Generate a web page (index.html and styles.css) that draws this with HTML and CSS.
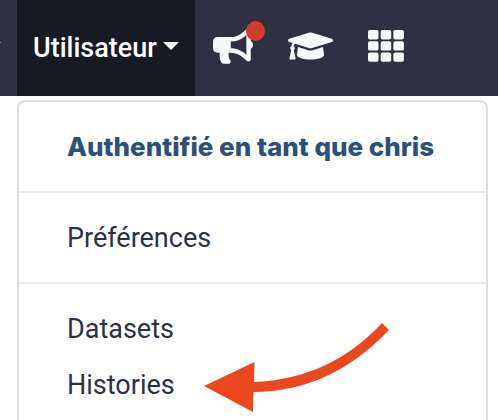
FILE: index.html
```html
<!DOCTYPE html>
<html lang="fr">
<head>
<meta charset="utf-8">
<title>Utilisateur</title>
<link rel="stylesheet" href="styles.css">
</head>
<body>
<header class="masthead">
  <div class="previous"><span class="caret"></span></div>
  <button class="user" type="button" aria-expanded="true">Utilisateur<span class="caret"></span></button>
  <nav class="tools">
    <a class="tool" href="#news" aria-label="Notifications">
      <svg width="40" height="36" viewBox="0 0 576 512"><path d="M576 240c0-23.63-12.95-44.04-32-55.12V32.01C544 23.26 537.02 0 512 0c-7.12 0-14.19 2.38-19.98 7.02l-85.03 68.03C364.28 109.19 310.66 128 256 128H64c-35.35 0-64 28.65-64 64v96c0 35.35 28.65 64 64 64h33.7c-1.39 10.48-2.18 21.14-2.18 32 0 39.77 9.26 77.35 25.56 110.94 5.19 10.69 16.52 17.06 28.4 17.06h74.28c26.05 0 41.69-29.84 25.9-50.56-16.4-21.52-26.15-48.36-26.15-77.44 0-11.11 1.62-21.79 4.41-32H256c54.66 0 108.28 18.81 150.98 52.95l85.03 68.03a32.023 32.023 0 0 0 19.98 7.02c24.92 0 32-22.78 32-32V295.13C563.05 284.04 576 263.63 576 240zm-96 141.42l-33.05-26.44C392.95 311.78 325.12 288 256 288v-96c69.12 0 136.95-23.78 190.95-66.98L480 98.58v282.84z"/></svg>
      <span class="badge"></span>
    </a>
    <a class="tool" href="#training" aria-label="Formation">
      <svg width="45" height="36" viewBox="0 0 640 512"><path d="M622.34 153.2L343.4 67.5c-15.2-4.67-31.6-4.67-46.79 0L17.66 153.2c-23.54 7.23-23.54 38.36 0 45.59l48.63 14.94c-10.67 13.19-17.23 29.28-17.88 46.9C38.78 266.15 32 276.11 32 288c0 10.78 5.68 19.85 13.86 25.65L20.33 428.53C18.11 438.52 25.71 448 35.94 448h56.11c10.24 0 17.84-9.48 15.62-19.47L82.14 313.65C90.32 307.85 96 298.78 96 288c0-11.57-6.47-21.25-15.66-26.87.76-15.02 8.44-28.3 20.69-36.72L296.6 284.5c9.06 2.78 26.44 6.25 46.79 0l278.95-85.7c23.55-7.24 23.55-38.36 0-45.6zM352.79 315.09c-28.53 8.76-52.84 3.92-65.59 0l-145.02-44.55L128 384c0 35.35 85.96 64 192 64s192-28.65 192-64l-14.18-113.47-145.03 44.56z"/></svg>
    </a>
    <a class="tool" href="#apps" aria-label="Applications">
      <svg width="36" height="32" viewBox="0 0 36 32"><path d="M1.7 0h7.1a1.7 1.7 0 0 1 1.7 1.7v6a1.7 1.7 0 0 1-1.7 1.7H1.7A1.7 1.7 0 0 1 0 7.7v-6A1.7 1.7 0 0 1 1.7 0z" id="cell"/><use href="#cell" x="12.7"/><use href="#cell" x="25.4"/><use href="#cell" y="11.2"/><use href="#cell" x="12.7" y="11.2"/><use href="#cell" x="25.4" y="11.2"/><use href="#cell" y="22.4"/><use href="#cell" x="12.7" y="22.4"/><use href="#cell" x="25.4" y="22.4"/></svg>
    </a>
  </nav>
</header>
<main class="menu">
  <div class="group"><a class="item current" href="#account">Authentifié en tant que chris</a></div>
  <div class="group"><a class="item" href="#preferences">Préférences</a></div>
  <div class="group">
    <a class="item" href="#datasets">Datasets</a>
    <a class="item" href="#histories">Histories
      <svg class="arrow" width="186" height="92" viewBox="0 0 186 92"><path d="M0 64L50.5 40L50 60Q126 57 178 1L185 8Q126 70 49.5 70L49 90Z"/></svg>
    </a>
  </div>
</main>
</body>
</html>
```
FILE: styles.css
```css
* { box-sizing: border-box; }

html { height: 100%; }

body {
  margin: 0;
  min-height: 100%;
  display: flex;
  flex-direction: column;
  background: #fff;
  color: #2c3143;
  font: 27px/56px Roboto, "Liberation Sans", sans-serif;
  overflow: hidden;
}

.masthead {
  display: flex;
  height: 96px;
  background: #2d3142;
}

.previous {
  width: 17px;
  display: flex;
  align-items: center;
  justify-content: flex-start;
}

.previous .caret { margin-left: -15px; }

.caret {
  display: inline-block;
  flex: none;
  border: 8px solid transparent;
  border-top-color: currentColor;
  border-bottom: 0;
}

.previous .caret { color: #f8f9fb; margin-bottom: 4px; }

.user {
  display: flex;
  align-items: center;
  gap: 6px;
  padding: 0 16px;
  border: 0;
  background: #181a23;
  color: #fff;
  font: inherit;
  font-weight: 500;
}

.user .caret { margin-bottom: 4px; }

.tools {
  display: flex;
  align-items: center;
  gap: 35px;
  padding: 0 18px 4px;
}

.tool {
  position: relative;
  display: flex;
  fill: #f8f9fb;
}

.badge {
  position: absolute;
  top: -7px;
  right: -12px;
  width: 19px;
  height: 20px;
  border-radius: 50%;
  background: #d03c29;
}

.menu {
  flex: 1;
  margin: 4px 10px 0 17px;
  border: 2px solid #dfdfdf;
  border-bottom: 0;
  border-radius: 8px 8px 0 0;
}

.group { padding: 17px 0 16px; }

.group + .group { border-top: 2px solid #e9e9ef; }

.group:last-child { padding-bottom: 0; }

.item {
  position: relative;
  display: block;
  padding: 0 48px;
  color: inherit;
  text-decoration: none;
  white-space: nowrap;
}

.current {
  color: #2c5179;
  font-family: Inter, "Liberation Sans", sans-serif;
  font-size: 26px;
  font-weight: 800;
}

.arrow {
  position: absolute;
  top: -35px;
  left: 185px;
  fill: #ec4820;
  overflow: visible;
}
```
